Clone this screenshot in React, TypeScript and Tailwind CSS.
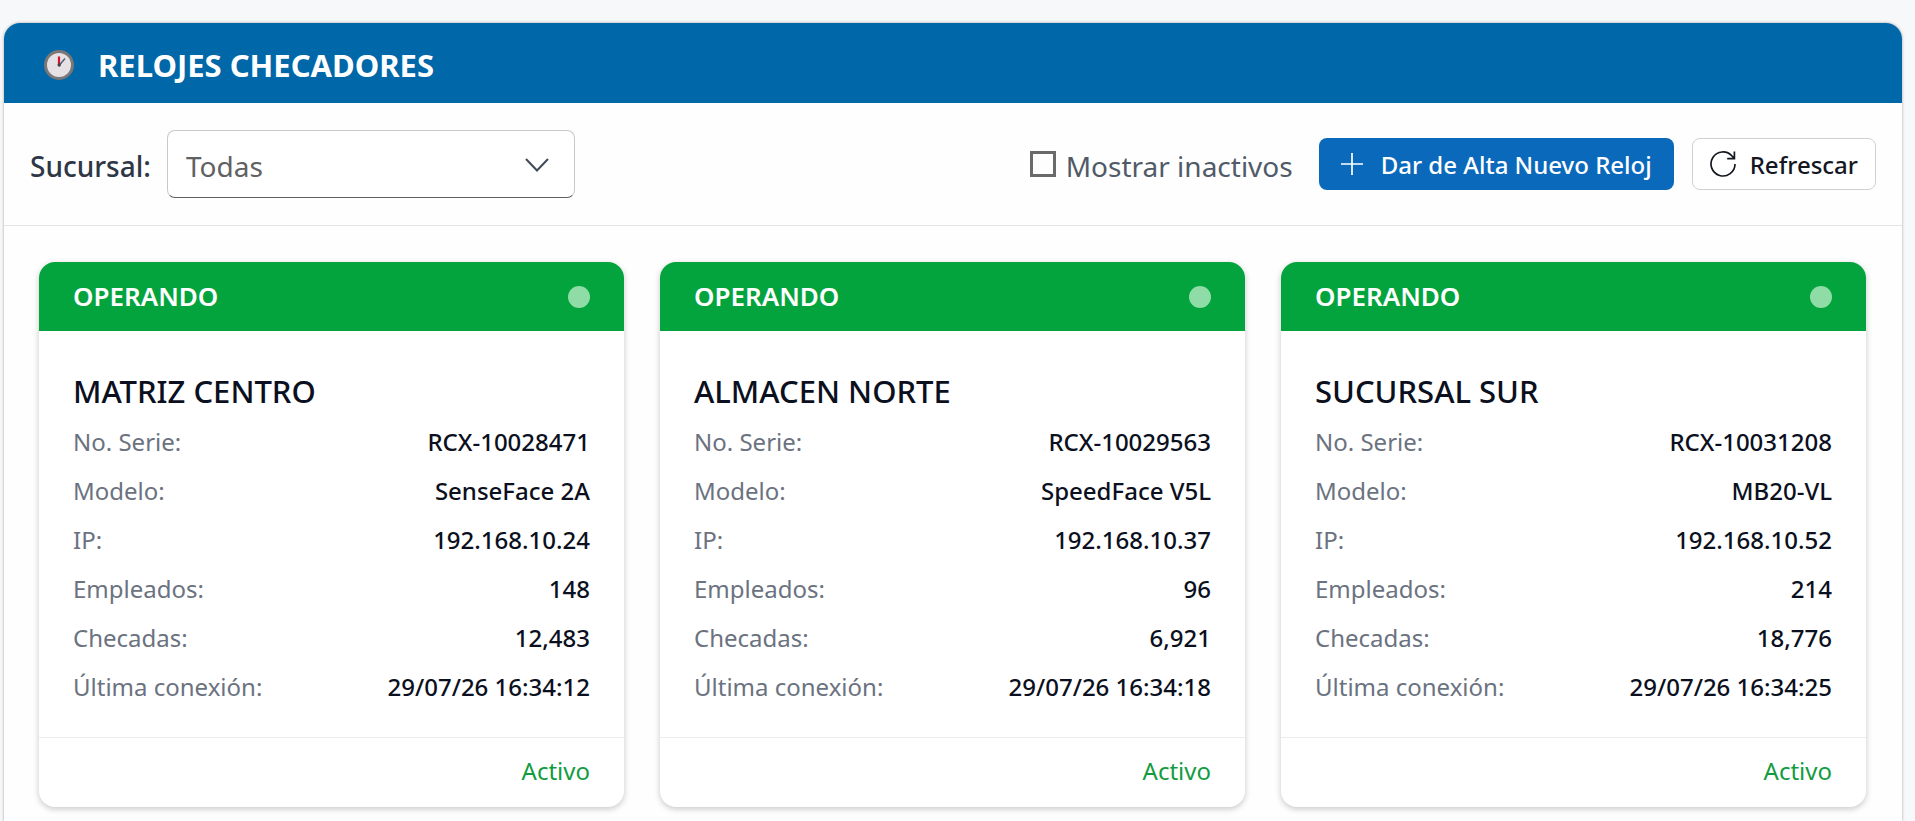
import { useState } from "react"

const clocks = [
  {
    name: "MATRIZ CENTRO",
    serial: "RCX-10028471",
    model: "SenseFace 2A",
    ip: "192.168.10.24",
    employees: 148,
    checks: 12483,
    lastSeen: "29/07/26 16:34:12",
  },
  {
    name: "ALMACEN NORTE",
    serial: "RCX-10029563",
    model: "SpeedFace V5L",
    ip: "192.168.10.37",
    employees: 96,
    checks: 6921,
    lastSeen: "29/07/26 16:34:18",
  },
  {
    name: "SUCURSAL SUR",
    serial: "RCX-10031208",
    model: "MB20-VL",
    ip: "192.168.10.52",
    employees: 214,
    checks: 18776,
    lastSeen: "29/07/26 16:34:25",
  },
]

type Clock = (typeof clocks)[number]

function ClockIcon() {
  return (
    <svg viewBox="0 0 30 30" className="size-[30px] shrink-0" aria-hidden="true">
      <circle cx="15" cy="15" r="15" fill="#7b7776" />
      <circle cx="15" cy="15" r="12" fill="#e6e1e5" />
      <path d="M15.5 15 21 8.5" stroke="#4a5c78" strokeWidth="1.4" />
      <path d="M15 15V6.5" stroke="#d3142e" strokeWidth="2.2" />
      <circle cx="15.2" cy="15" r="1.7" fill="#444" />
    </svg>
  )
}

function Row({ label, value }: { label: string; value: string }) {
  return (
    <div className="flex justify-between leading-[49px]">
      <dt className="text-[#6b7280]">{label}</dt>
      <dd className="font-medium text-[#0b1020]">{value}</dd>
    </div>
  )
}

function ClockCard({ clock }: { clock: Clock }) {
  return (
    <article className="overflow-hidden rounded-2xl bg-white text-2xl shadow-[0_2px_6px_rgba(0,0,0,0.22)]">
      <div className="flex h-[69px] items-center justify-between bg-[#03a33e] px-[34px] text-white">
        <span className="text-[26px] font-semibold">OPERANDO</span>
        <span className="size-[22px] rounded-full bg-[#8fdca6]" />
      </div>
      <div className="px-[34px] pt-10 pb-[26px]">
        <h2 className="mb-1.5 text-[31px] leading-10 font-medium text-[#0b1020]">{clock.name}</h2>
        <dl>
          <Row label="No. Serie:" value={clock.serial} />
          <Row label="Modelo:" value={clock.model} />
          <Row label="IP:" value={clock.ip} />
          <Row label="Empleados:" value={String(clock.employees)} />
          <Row label="Checadas:" value={clock.checks.toLocaleString("en-US")} />
          <Row label="Última conexión:" value={clock.lastSeen} />
        </dl>
      </div>
      <div className="flex h-[70px] items-center justify-end border-t border-[#ececec] px-[34px] pb-1 text-[#129c3f]">
        Activo
      </div>
    </article>
  )
}

export default function App() {
  const [branch, setBranch] = useState("")
  const [showInactive, setShowInactive] = useState(false)

  return (
    <div className="bg-[#f7f8f9] pt-[23px] pr-[13px] pl-1 font-['Noto_Sans','Open_Sans',sans-serif]">
      <main className="min-h-[calc(100vh-23px)] overflow-hidden rounded-t-2xl bg-[#fefefe] shadow-[0_0_3px_rgba(0,0,0,0.35)]">
        <header className="flex h-20 items-center gap-6 bg-[#0067a8] px-10 pt-1 text-white">
          <ClockIcon />
          <h1 className="text-[31px] font-bold">RELOJES CHECADORES</h1>
        </header>

        <div className="flex items-center justify-between border-b border-[#e3e4e6] px-[26px] py-[27px]">
          <div className="flex items-center gap-4">
            <label htmlFor="branch" className="pt-1 text-[28px] font-medium text-[#2f3747]">
              Sucursal:
            </label>
            <div className="relative w-[408px]">
              <select
                id="branch"
                value={branch}
                onChange={(e) => setBranch(e.target.value)}
                className="h-[68px] w-full appearance-none rounded-lg border border-[#c9c9c9] border-b-[#616161] bg-white px-[18px] pt-1 text-[28px] text-[#616161]"
              >
                <option value="">Todas</option>
                {clocks.map((clock) => (
                  <option key={clock.name}>{clock.name}</option>
                ))}
              </select>
              <svg
                viewBox="0 0 24 14"
                className="pointer-events-none absolute top-7 right-[26px] h-3.5 w-6"
                fill="none"
                stroke="#424a58"
                strokeWidth="2"
                aria-hidden="true"
              >
                <path d="M1 1 12 12.5 23 1" />
              </svg>
            </div>
          </div>

          <div className="flex items-center">
            <label className="mr-[26px] flex items-center gap-2.5 text-[28px] text-[#515a68]">
              <input
                type="checkbox"
                checked={showInactive}
                onChange={(e) => setShowInactive(e.target.checked)}
                className="size-[26px] appearance-none border-[3px] border-[#6a6a6a] checked:bg-[#0f6cbd]"
              />
              <span className="pt-1">Mostrar inactivos</span>
            </label>
            <button className="mr-[18px] flex h-[52px] items-center gap-[18px] rounded-lg bg-[#0b69bb] px-[22px] text-2xl font-medium text-white">
              <svg viewBox="0 0 22 22" className="size-[22px]" stroke="currentColor" strokeWidth="1.7" aria-hidden="true">
                <path d="M11 0v22M0 11h22" />
              </svg>
              <span className="pt-0.5">Dar de Alta Nuevo Reloj</span>
            </button>
            <button className="flex h-[52px] items-center gap-3.5 rounded-lg border border-[#d1d1d1] bg-white px-[17px] text-2xl font-medium text-[#14171f]">
              <svg
                viewBox="0 0 26 26"
                className="size-[26px]"
                fill="none"
                stroke="currentColor"
                strokeWidth="1.7"
                aria-hidden="true"
              >
                <path d="M25 13A12 12 0 1 1 22 5L24.2 7.4M24.4 0.4V7.6H17.2" />
              </svg>
              <span className="pt-0.5">Refrescar</span>
            </button>
          </div>
        </div>

        <section className="grid grid-cols-3 gap-9 pt-9 pr-9 pb-3.5 pl-[35px]">
          {clocks.map((clock) => (
            <ClockCard key={clock.serial} clock={clock} />
          ))}
        </section>
      </main>
    </div>
  )
}
